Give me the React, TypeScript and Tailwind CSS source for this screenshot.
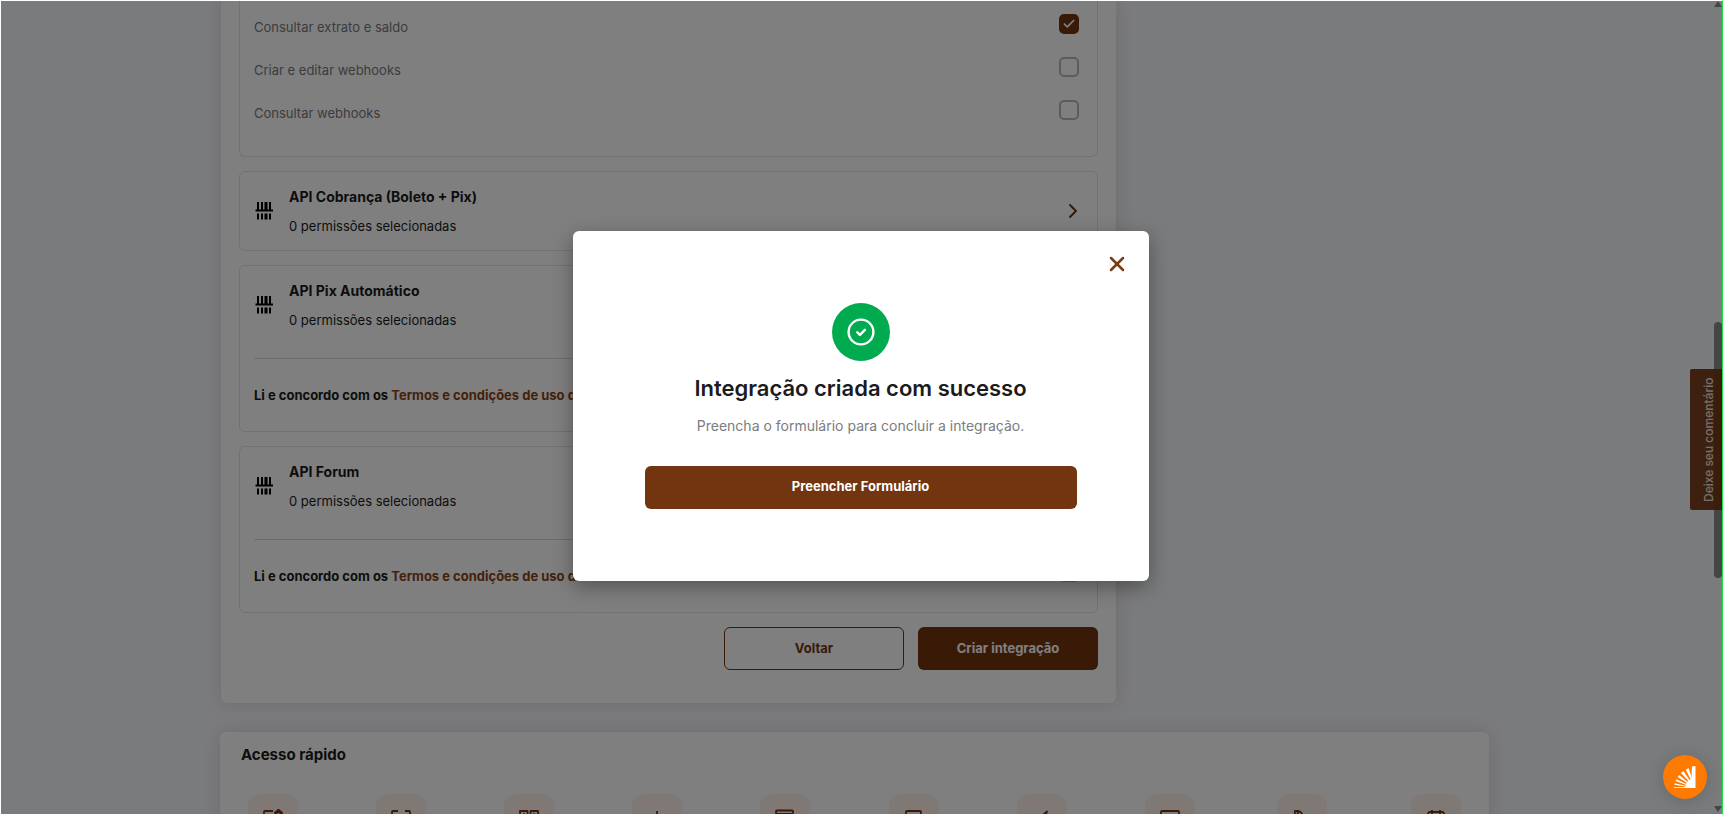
import { ReactNode } from "react";
import { Check, ChevronRight, X } from "lucide-react";

const permissions = [
  { id: "extrato", label: "Consultar extrato e saldo", checked: true },
  { id: "webhooks-editar", label: "Criar e editar webhooks", checked: false },
  { id: "webhooks-consultar", label: "Consultar webhooks", checked: false },
];

const apis = [
  { id: "cobranca", name: "API Cobrança (Boleto + Pix)", terms: false },
  { id: "pix-automatico", name: "API Pix Automático", terms: true },
  { id: "forum", name: "API Forum", terms: true },
];

const shortcuts: { name: string; icon: ReactNode }[] = [
  { name: "Pix", icon: <><path d="M10 2H2a1 1 0 0 0-1 1v15h15v-5" /><path d="m15.500.8 3.500 3-.5 3-3 2-3-2-.5-3z" fill="currentColor" /><path d="M15.500 4v2" stroke="#fff0ea" /></> },
  { name: "Boleto", icon: <><path d="M7 2H2a1 1 0 0 0-1 1v4M14 2h4a1 1 0 0 1 1 1v4M1 13v4a1 1 0 0 0 1 1h4M19 13v4a1 1 0 0 1-1 1h-4" /><path d="M10 5v10" /></> },
  { name: "QR Code", icon: <><rect x="1" y="2" width="7.500" height="7" /><rect x="11.500" y="2" width="7.500" height="7" /><path d="M4 5h1.500M14.500 5H16M1 12h7v7H1zM12 12h7v7h-7z" /></> },
  { name: "Depositar", icon: <path d="M10 2v12M5 9l5 5 5-5M2 18h16" /> },
  { name: "Extrato", icon: <><rect x="1" y="1.500" width="17" height="3.500" rx="1" /><path d="M3 5.500V18h13V5.500" /></> },
  { name: "Recarga", icon: <><rect x="2" y="2" width="15" height="16" rx="1" /><path d="M9.500 5v8M5.500 9h8" /></> },
  { name: "Investir", icon: <path d="M15 2.500 4 12l5 1 1 5z" fill="currentColor" /> },
  { name: "Cartão", icon: <rect x="1" y="2" width="18" height="14" rx="1" /> },
  { name: "Empréstimo", icon: <><path d="M2 18 3 2h3l-1 8" /><path d="M5 2c3 0 5 2 6 5v11" /></> },
  { name: "Agenda", icon: <><rect x="2" y="3" width="16" height="15" rx="2" /><path d="M6 1v4M14 1v4M2 7h16" /></> },
];

function BarcodeIcon() {
  return (
    <svg viewBox="0 0 21 21" className="h-[21px] w-[21px] shrink-0" fill="#000">
      <path d="M3 1h2v8H3zM7 1h2v8H7zM10.500 1h3v8h-3zM15 1h2v8h-2z" />
      <path d="M1.500 8.500h17.500v2H1.500z" />
      <path d="M3 12.500h2v6H3zM7 12.500h2v6H7zM10.500 12.500h3v6h-3zM15 12.500h2v6h-2z" />
    </svg>
  );
}

function Checkbox({ id, checked = false }: { id: string; checked?: boolean }) {
  return (
    <span className="relative h-5 w-5 shrink-0">
      <input
        id={id}
        type="checkbox"
        defaultChecked={checked}
        className="peer block h-5 w-5 appearance-none rounded-[5px] border-2 border-[#b8b8b8] checked:border-[#72350f] checked:bg-[#72350f]"
      />
      <Check className="pointer-events-none absolute top-[3px] left-[3px] hidden h-[14px] w-[14px] text-white peer-checked:block" strokeWidth={3} />
    </span>
  );
}

function ApiCard({ id, name, terms }: { id: string; name: string; terms: boolean }) {
  return (
    <section className="rounded-md border border-[#e2e2e3] px-[14px]">
      <div className="flex h-[78px] items-center gap-[14px]">
        <BarcodeIcon />
        <div className="flex flex-1 flex-col gap-[5px]">
          <h3 className="text-sm leading-6 font-bold">{name}</h3>
          <p className="text-[13px] leading-6">0 permissões selecionadas</p>
        </div>
        {!terms && <ChevronRight className="-mr-0.5 h-6 w-6 text-[#72350f]" />}
      </div>
      {terms && (
        <div className="mt-[14px] border-t border-[#d8d8d8] pt-[22px] pb-[26px]">
          <div className="flex justify-between pr-1">
            <label htmlFor={`termos-${id}`} className="pt-1 text-[13px] leading-5 font-bold">
              Li e concordo com os <a href="#termos" className="text-[#8a4317]">Termos e condições de uso da API</a>
            </label>
            <Checkbox id={`termos-${id}`} />
          </div>
        </div>
      )}
    </section>
  );
}

function SuccessDialog() {
  return (
    <div className="absolute inset-0 flex items-center justify-center bg-black/50 pr-0.5 pb-1">
      <div role="dialog" aria-labelledby="dialog-title" className="relative flex w-full max-w-[576px] flex-col items-center rounded-md bg-white p-[72px] shadow-[0_6px_20px_rgba(0,0,0,0.35)]">
        <button aria-label="Fechar" className="absolute top-[21px] right-5 text-[#7a3a12]">
          <X className="h-6 w-6" strokeWidth={2.5} />
        </button>
        <div className="flex h-[58px] w-[58px] items-center justify-center rounded-full bg-[#00ab4f]">
          <svg viewBox="0 0 28 28" className="h-7 w-7" fill="none" stroke="#fff" strokeWidth="2.4" strokeLinecap="round" strokeLinejoin="round">
            <circle cx="14" cy="14" r="12.400" />
            <path d="m10.300 14.300 2.600 2.600 5-5.100" />
          </svg>
        </div>
        <h2 id="dialog-title" className="mt-[13px] text-[22px] leading-7 font-semibold text-[#1b1b1d]">Integração criada com sucesso</h2>
        <p className="mt-3 text-sm leading-6 text-[#7b7c80]">Preencha o formulário para concluir a integração.</p>
        <button className="mt-7 h-[43px] w-full rounded-md bg-[#72350f] text-[13px] font-bold text-white">Preencher Formulário</button>
      </div>
    </div>
  );
}

// fan of rays opening from the bottom right corner
function RaysLogo() {
  return (
    <svg viewBox="0 0 24 24" className="h-6 w-6" fill="#fff">
      <path d="M19 1.500 22.500 1v22H18z" />
      <path d="M22 23H12a10 10 0 0 1 10-10z" />
      <path d="M22 23 12.700 4.600l3-1.400z" />
      <path d="M22 23 8 8l2.400-2z" />
      <path d="M22 23 4.700 12l1.500-2z" />
      <path d="M22 23 2.500 16l.8-1.700z" />
      <path d="M22 23 1.300 19.700l.4-1.400z" />
      <path d="M1 22.200h21v.8H1z" />
    </svg>
  );
}

export default function App() {
  return (
    <div className="relative flex h-screen overflow-hidden border-t border-r border-l border-t-white border-r-[#1fe04b] border-l-white bg-[#f5f6f9] font-['Inter',sans-serif] text-[#1b1b1d]">
      <main className="min-w-0 flex-1">
        <div className="mx-auto max-w-[1269px]">
          <div className="ml-px w-full max-w-[895px] rounded-b-md bg-white px-[18px] pb-[33px] shadow-[0_0_18px_rgba(40,40,70,0.14)]">
            <div className="flex flex-col gap-[14px]">
              <section className="rounded-b-md border border-t-0 border-[#e2e2e3] px-[14px] pt-[13px] pb-[13px]">
                {permissions.map((item) => (
                  <div key={item.id} className="flex h-[43px] items-start justify-between pr-1">
                    <label htmlFor={item.id} className="pt-[3px] text-[13px] leading-5 text-[#77787c]">{item.label}</label>
                    <Checkbox id={item.id} checked={item.checked} />
                  </div>
                ))}
              </section>
              {apis.map((api) => (
                <ApiCard key={api.id} {...api} />
              ))}
              <div className="flex justify-end gap-[14px]">
                <button className="h-[43px] w-[180px] rounded-md border border-[#72350f] text-[13px] font-bold text-[#72350f]">Voltar</button>
                <button className="h-[43px] w-[180px] rounded-md bg-[#72350f] text-[13px] font-bold text-white">Criar integração</button>
              </div>
            </div>
          </div>

          <section className="mt-[29px] rounded-t-md bg-white px-[21px] pt-[11px] shadow-[0_0_18px_rgba(40,40,70,0.14)]">
            <h2 className="text-[15px] leading-6 font-bold">Acesso rápido</h2>
            <div className="mt-[27px] grid grid-cols-[repeat(7,128fr)_132fr_134fr_50fr] px-[7px]">
              {shortcuts.map((item) => (
                <button key={item.name} aria-label={item.name} className="flex h-[50px] w-[50px] items-center justify-center rounded-xl bg-[#fff0ea] text-[#72350f]">
                  <svg viewBox="0 0 20 20" className="h-5 w-5" fill="none" stroke="currentColor" strokeWidth="1.8" strokeLinejoin="round">{item.icon}</svg>
                </button>
              ))}
            </div>
          </section>
        </div>
      </main>

      <div className="relative w-[14px] shrink-0">
        <svg viewBox="0 0 8 6" className="absolute top-0 right-0 h-1.5 w-2" fill="#8a8a8a"><path d="M4 0 8 6H0z" /></svg>
        <div className="absolute top-[321px] right-0 h-[256px] w-2 rounded-full bg-[#8a8a8a]" />
        <svg viewBox="0 0 8 6" className="absolute right-0 bottom-0.5 h-1.5 w-2" fill="#8a8a8a"><path d="M0 0h8L4 6z" /></svg>
      </div>

      <button className="absolute top-[368px] right-0 flex h-[141px] w-8 rotate-180 items-center justify-center rounded-r-xs bg-[#733712]/95 pr-1.5 text-xs font-medium text-[#e8e0dc] [writing-mode:vertical-rl]">
        Deixe seu comentário
      </button>

      <SuccessDialog />

      <button aria-label="Atendimento" className="absolute right-[15px] bottom-[15px] flex h-11 w-11 items-center justify-center rounded-full bg-[#ff7a00] shadow-[0_2px_18px_rgba(0,0,0,0.16)]">
        <RaysLogo />
      </button>
    </div>
  );
}
